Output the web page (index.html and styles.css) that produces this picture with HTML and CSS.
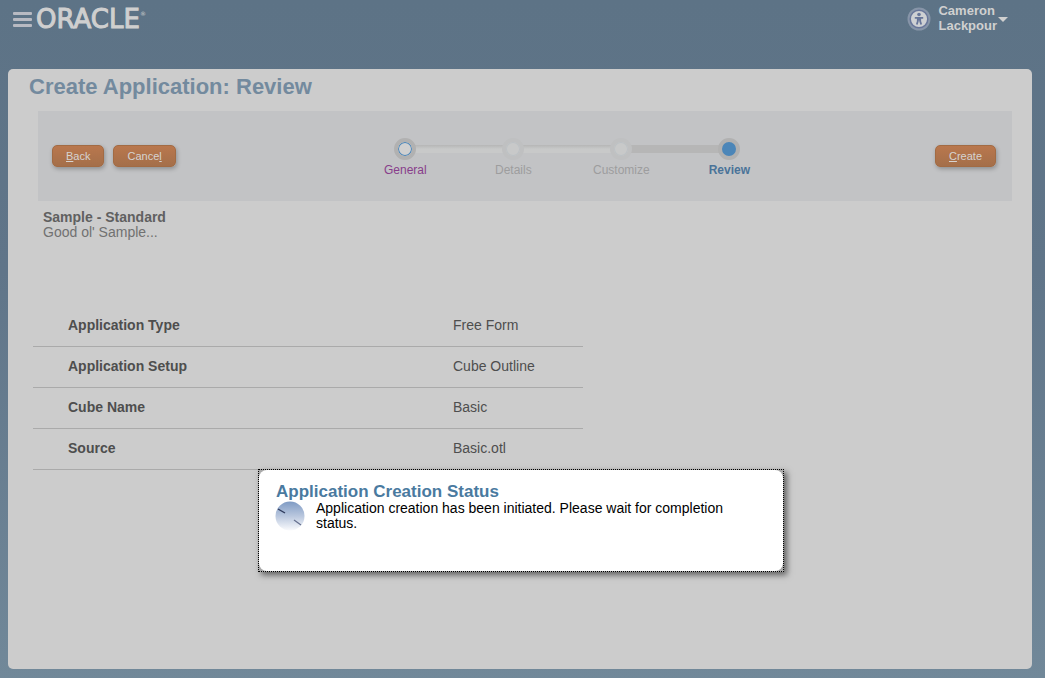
FILE: index.html
```html
<!DOCTYPE html>
<html lang="en">
<head>
<meta charset="utf-8">
<title>Create Application: Review</title>
<link rel="stylesheet" href="styles.css">
</head>
<body>
<header class="topbar">
  <button class="menu" type="button" aria-label="Menu"><span></span><span></span><span></span></button>
  <div class="logo">ORACLE<sup>®</sup></div>
  <div class="user-area">
    <button class="access" type="button" aria-label="Accessibility">
      <svg width="24" height="24" viewBox="0 0 24 24">
        <circle cx="12" cy="12" r="11.5" fill="#8795a8"/>
        <circle cx="12" cy="12" r="8.8" fill="#ced0d3" stroke="#68769a" stroke-width="1.5"/>
        <circle cx="12" cy="7.5" r="1.8" fill="#68769a"/>
        <path d="M7.8 10.8h8.4M12 10.5v3M10.8 11v3.2l-1 3.3M13.2 11v3.2l1 3.3" fill="none" stroke="#68769a" stroke-width="1.8" stroke-linejoin="round"/>
      </svg>
    </button>
    <button class="user" type="button"><span>Cameron<br>Lackpour</span><svg width="10" height="6" viewBox="0 0 10 6"><path d="M0 0h10L5 5z" fill="#d0d0d0"/></svg></button>
  </div>
</header>
<main class="panel">
  <h1>Create Application: Review</h1>
  <div class="wizard">
    <div class="actions">
      <button class="btn" type="button"><u>B</u>ack</button>
      <button class="btn" type="button">Cance<u>l</u></button>
    </div>
    <ol class="train">
      <li class="step visited"><i></i><a href="#general">General</a></li>
      <li class="step"><i></i><span>Details</span></li>
      <li class="step"><i></i><span>Customize</span></li>
      <li class="step current"><i></i><span>Review</span></li>
    </ol>
    <button class="btn" type="button"><u>C</u>reate</button>
  </div>
  <section class="summary">
    <h2>Sample - Standard</h2>
    <p>Good ol' Sample...</p>
  </section>
  <table class="details">
    <tbody>
      <tr><th scope="row">Application Type</th><td>Free Form</td></tr>
      <tr><th scope="row">Application Setup</th><td>Cube Outline</td></tr>
      <tr><th scope="row">Cube Name</th><td>Basic</td></tr>
      <tr><th scope="row">Source</th><td>Basic.otl</td></tr>
    </tbody>
  </table>
</main>
<div class="dialog" role="dialog" aria-labelledby="status-title">
  <div class="dialog-body">
    <h2 id="status-title">Application Creation Status</h2>
    <div class="status">
      <svg width="30" height="30" viewBox="0 0 30 30">
        <defs><linearGradient id="face" x1="0" y1="0" x2="0" y2="1"><stop offset="0" stop-color="#7f9bc4"/><stop offset="0.5" stop-color="#b9c7de"/><stop offset="1" stop-color="#fafbfd"/></linearGradient></defs>
        <circle cx="15" cy="15" r="14.5" fill="url(#face)"/>
        <path d="M3 8l7 4" stroke="#2f3a5c" stroke-width="1.4"/>
        <path d="M19 19l7 5" stroke="#66708f" stroke-width="1.2"/>
      </svg>
      <p>Application creation has been initiated. Please wait for completion status.</p>
    </div>
  </div>
</div>
</body>
</html>
```
FILE: styles.css
```css
* { box-sizing: border-box; }
html { height: 100%; }
body {
  margin: 0;
  min-height: 100%;
  display: flex;
  flex-direction: column;
  padding: 0 13px 9px 8px;
  background: linear-gradient(#5d7386, #607589 40%, #718899);
  font: 14px/15px "Liberation Sans", Arial, sans-serif;
  color: #4e4e4e;
}
h1, h2, p, ol { margin: 0; padding: 0; }
button { font: inherit; border: 0; background: none; padding: 0; cursor: pointer; }

.topbar { display: flex; align-items: flex-start; height: 69px; padding: 0 24px 0 5px; }
.menu { display: flex; flex-direction: column; gap: 3px; width: 19px; margin-top: 12px; }
.menu span { height: 3px; border-radius: 1px; background: #b8bac2; }
.logo {
  margin: 7px 0 0 4px;
  font: 26px/24px "DejaVu Sans", sans-serif;
  color: #cfcfcf;
  -webkit-text-stroke: 1px #cfcfcf;
}
.logo sup { font-size: 6px; line-height: 6px; vertical-align: 12px; -webkit-text-stroke: 0; }
.user-area { display: flex; align-items: flex-start; gap: 7px; margin-left: auto; }
.access { height: 24px; margin-top: 7px; }
.user {
  display: flex;
  align-items: center;
  gap: 1px;
  margin-top: 3px;
  text-align: left;
  font-size: 13px;
  font-weight: bold;
  color: #d0d0d0;
}
.user svg { margin-top: 3px; }

.panel { flex: 1; background: #ccc; border-radius: 5px; }
h1 { padding: 6px 21px 0; font-size: 22px; line-height: 24px; color: #738a9e; }
.wizard {
  display: flex;
  align-items: center;
  justify-content: space-between;
  height: 90px;
  margin: 12px 20px 0 30px;
  padding: 0 16px 0 14px;
  background: #c2c3c5;
}
.actions { display: flex; gap: 9px; }
.btn {
  height: 22px;
  padding: 0 13px;
  border-radius: 5px;
  background: linear-gradient(#b9774d, #a46f4a);
  border: 1px solid #a26b44;
  box-shadow: 1px 2px 4px #0004;
  color: #d6d3d1;
  font-size: 11px;
  line-height: 18px;
}
.train {
  display: grid;
  grid-template-columns: repeat(4, 108px);
  margin: 4px 0 0 24px;
  list-style: none;
  font-size: 12px;
}
.step { position: relative; display: flex; flex-direction: column; align-items: center; gap: 3px; color: #9d9d9e; }
.step + .step::before {
  content: "";
  position: absolute;
  top: 7px;
  right: 50%;
  width: 100%;
  height: 8px;
  background: linear-gradient(#b6b6b6, #c8c9c9 4px);
}
.step.current::before { background: #b6b6b6; }
.step i {
  z-index: 1;
  width: 22px;
  height: 22px;
  border: 4px solid #bfc0c1;
  border-radius: 50%;
  background: #c8c9c9;
  box-shadow: inset 0 0 0 1px #bcc1c5;
}
.step.visited i { border-color: #b1b1b1; background: #d0d0d0; box-shadow: inset 0 0 0 1px #4785bb; }
.step.current i { border-color: #b1b1b1; background: #4c86b8; box-shadow: none; }
.step a { color: #883d8b; text-decoration: none; }
.step.current { color: #4a7399; font-weight: bold; }

.summary { padding: 9px 35px 0; color: #717171; }
.summary h2 { font-size: 14px; line-height: 15px; color: #606060; }
.details { width: 550px; margin: 65px 0 0 25px; border-collapse: collapse; }
.details th, .details td { height: 41px; padding: 0; border-bottom: 1px solid #aaa; text-align: left; }
.details th { width: 420px; padding-left: 35px; }

.dialog {
  position: absolute;
  top: 469px;
  left: 258px;
  width: 526px;
  height: 103px;
  border: 1px dotted #000;
  background: #aaa;
  box-shadow: 3px 3px 6px #0008;
}
.dialog-body { height: 100%; padding: 13px 17px; border-radius: 8px; background: #fff; color: #000; }
.dialog h2 { font-size: 17px; line-height: 18px; color: #4a7a9f; }
.status { display: flex; gap: 11px; }
.status svg { flex: none; margin-left: -1px; }
.status p { width: 430px; }
```
